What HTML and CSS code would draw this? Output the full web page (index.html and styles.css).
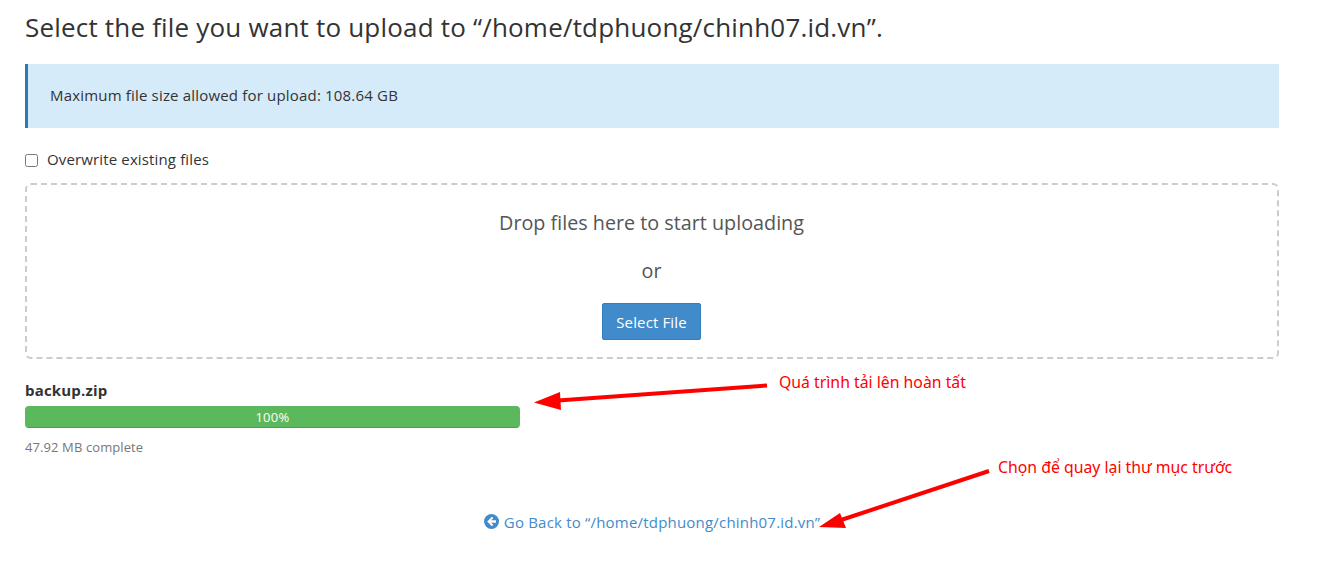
FILE: index.html
```html
<!DOCTYPE html>
<html lang="vi">
<head>
    <meta charset="UTF-8">
    <title>File Upload</title>
    <link rel="stylesheet" href="styles.css">
</head>
<body>
    <div class="container">
        <h1 class="page-title">Select the file you want to upload to “/home/tdphuong/chinh07.id.vn”.</h1>

        <div class="alert-info">Maximum file size allowed for upload: 108.64 GB</div>

        <label class="overwrite">
            <input type="checkbox">
            <span>Overwrite existing files</span>
        </label>

        <div class="dropzone">
            <div class="drop-text">Drop files here to start uploading</div>
            <div class="drop-or">or</div>
            <button class="btn-select">Select File</button>
        </div>

        <div class="upload-item">
            <div class="file-name">backup.zip</div>
            <div class="progress">
                <div class="progress-bar">100%</div>
            </div>
            <div class="file-status">47.92 MB complete</div>
        </div>

        <div class="back-row">
            <a class="back-link" href="#">
                <svg class="back-icon" viewBox="0 0 14 14" width="15" height="15">
                    <circle cx="7" cy="7" r="7" fill="#428bca"/>
                    <path d="M7.4 2.6 L3 7 L7.4 11.400 L8.700 10.100 L6.600 8.200 H11.200 V5.800 H6.600 L8.700 3.900 Z" fill="#fff"/>
                </svg>
                <span>Go Back to “/home/tdphuong/chinh07.id.vn”</span>
            </a>
        </div>
    </div>

    <!-- red annotations drawn over the screenshot -->
    <svg class="arrows" width="1328" height="568" viewBox="0 0 1328 568">
        <path d="M767 385.500 L558 400.500" stroke="#f00" stroke-width="4" fill="none"/>
        <path d="M534 402.500 L560 392 L561 410 Z" fill="#f00"/>
        <path d="M989 471 L838 521" stroke="#f00" stroke-width="4" fill="none"/>
        <path d="M819 527 L840 513 L846 528 Z" fill="#f00"/>
    </svg>
    <div class="note note-one">Quá trình tải lên hoàn tất</div>
    <div class="note note-two">Chọn để quay lại thư mục trước</div>
</body>
</html>
```

FILE: styles.css
```css
* {
    box-sizing: border-box;
}
body {
    margin: 0;
    background: #fff;
    color: #333;
    font-family: "Open Sans", Arial, sans-serif;
    font-size: 15px;
    letter-spacing: 0.18px;
    line-height: 20px;
}
.container {
    width: 1254px;
    margin-left: 25px;
}
.page-title {
    margin: 0;
    padding-top: 10px;
    font-size: 26px;
    font-weight: 400;
    letter-spacing: 0.19px;
    line-height: 34px;
}
.alert-info {
    margin-top: 20px;
    height: 64px;
    padding: 21px 22px;
    background: #d6ebf9;
    border-left: 3px solid #2a7ab5;
}
.overwrite {
    display: flex;
    align-items: center;
    gap: 9px;
    margin-top: 21px;
    height: 20px;
    letter-spacing: 0.14px;
}
.overwrite input {
    width: 13px;
    height: 13px;
    margin: 3px 0 0 0;
}
.dropzone {
    margin-top: 14px;
    height: 176px;
    padding-right: 1px;
    border: 2px dashed #ccc;
    border-radius: 6px;
    text-align: center;
    color: #555;
    font-size: 19.75px;
    letter-spacing: 0;
}
.drop-text {
    margin-top: 24px;
    line-height: 28px;
}
.drop-or {
    margin-top: 20px;
    line-height: 28px;
}
.btn-select {
    display: block;
    margin: 18px auto 0;
    padding: 0;
    width: 99px;
    height: 37px;
    background: #428bca;
    border: 1px solid #357ebd;
    border-radius: 2px;
    color: #fff;
    font-family: inherit;
    font-size: 15px;
    letter-spacing: 0.13px;
}
.upload-item {
    margin-top: 21px;
}
.file-name {
    font-weight: 700;
    line-height: 20px;
}
.progress {
    margin-top: 6px;
    width: 495px;
    height: 22px;
    border-radius: 4px;
    overflow: hidden;
    background: #f5f5f5;
}
.progress-bar {
    height: 100%;
    background: #5cb85c;
    box-shadow: inset 0 -1px 0 rgba(0,0,0,0.15);
    color: #fff;
    font-size: 13px;
    letter-spacing: 0.3px;
    line-height: 23px;
    text-align: center;
}
.file-status {
    margin-top: 9px;
    color: #777;
    font-size: 13px;
    letter-spacing: 0.1px;
    line-height: 20px;
}
.back-row {
    margin-top: 55px;
    text-align: center;
}
.back-link {
    color: #428bca;
    text-decoration: none;
    letter-spacing: 0.2px;
}
.back-icon {
    vertical-align: -1px;
    margin-right: 1px;
}
.arrows {
    position: absolute;
    top: 0;
    left: 0;
    pointer-events: none;
}
.note {
    position: absolute;
    color: #f00;
    font-family: "Noto Sans", Tahoma, sans-serif;
    font-size: 15.8px;
    letter-spacing: 0;
    line-height: 20px;
    white-space: nowrap;
}
.note-one {
    left: 779px;
    top: 372px;
}
.note-two {
    left: 998px;
    top: 457px;
}
```
